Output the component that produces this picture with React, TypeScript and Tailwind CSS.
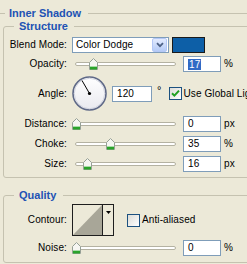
import type { ReactNode } from "react";

const sliders = [
  { label: "Distance:", pos: 0, value: "0", unit: "px", gap: "mt-[5px]" },
  { label: "Choke:", pos: 34, value: "35", unit: "%", gap: "mt-[4px]" },
  { label: "Size:", pos: 11, value: "16", unit: "px", gap: "mt-[4px]" },
];

function Thumb() {
  return (
    <svg width="9" height="12" viewBox="0 0 9 12">
      <path d="M0.5 11.5V4.5L4.5 0.5L8.5 4.5V11.5Z" fill="#f6f6f2" stroke="#96a096" />
      <rect x="1" y="9" width="7" height="2.5" fill="#2aa32a" />
      <rect x="1" y="8" width="7" height="1" fill="#a8dca8" />
    </svg>
  );
}

function Slider({ pos }: { pos: number }) {
  return (
    <div className="relative w-[111px] h-[16px] shrink-0 flex items-center pl-[3px]">
      <div className="w-[101px] h-[4px] rounded-full border border-[#b4b2a2] bg-white" />
      <div className="absolute top-[2px] flex" style={{ left: pos }}>
        <Thumb />
      </div>
    </div>
  );
}

function Field({ value, selected, wide }: { value: string; selected?: boolean; wide?: boolean }) {
  return (
    <div
      className={`${wide ? "w-[40px]" : "w-[38px]"} h-[16px] shrink-0 border border-[#7f9db9] bg-white flex items-center pl-[4px]`}
    >
      {selected ? <span className="bg-[#316ac5] text-white px-px leading-[11px]">{value}</span> : value}
    </div>
  );
}

function Check({ on }: { on?: boolean }) {
  return (
    <span className="w-[13px] h-[13px] shrink-0 border border-[#1c5180] bg-linear-to-br from-[#dcdcd7] to-white flex items-center justify-center">
      {on && (
        <svg width="9" height="9" viewBox="0 0 9 9">
          <path d="M1 4.2L3.4 6.6L8 1.6" stroke="#21a121" strokeWidth="2" fill="none" />
        </svg>
      )}
    </span>
  );
}

function Row({ label, className, children }: { label: string; className?: string; children: ReactNode }) {
  return (
    <div className={`flex items-center ${className ?? ""}`}>
      <span className="w-[63px] mr-[5px] shrink-0 text-right">{label}</span>
      {children}
    </div>
  );
}

function Dial() {
  return (
    <svg width="35" height="35" viewBox="0 0 35 35" className="shrink-0">
      <defs>
        <linearGradient id="dial" x1="0" y1="0" x2="0" y2="1">
          <stop offset="0" stopColor="#ffffff" />
          <stop offset="1" stopColor="#e9e9ef" />
        </linearGradient>
      </defs>
      <circle cx="17.5" cy="17.5" r="16.5" fill="url(#dial)" stroke="#5f6987" strokeWidth="1.6" />
      <circle cx="17.5" cy="17.5" r="15.2" fill="none" stroke="#c9cdd9" strokeWidth="0.8" />
      <line x1="17.5" y1="17.5" x2="10" y2="4.5" stroke="#000" strokeWidth="1" />
      <circle cx="17.5" cy="17.5" r="1.6" fill="#000" />
    </svg>
  );
}

export default function App() {
  return (
    <div className="w-[247px] h-[264px] overflow-hidden bg-[#ece9d8] pt-[6px] text-[10px] tracking-[0.1px] leading-none text-black font-['Liberation_Sans',Arial,sans-serif]">
      <div className="flex items-center h-[14px]">
        <div className="w-[5px] h-px bg-[#c5c2b0]" />
        <span className="ml-[4px] mr-[7px] font-bold text-[11px] tracking-normal text-[#2152b4]">Inner Shadow</span>
        <div className="flex-1 h-px bg-[#c5c2b0]" />
      </div>

      <fieldset className="ml-[3px] w-[270px] rounded-[3px] border border-[#c5c2b0] pb-[5px]">
        <legend className="ml-[10px] pl-[5px] pr-[6px] leading-[12px] font-bold text-[11px] tracking-normal text-[#2152b4]">
          Structure
        </legend>

        <Row label="Blend Mode:" className="mt-[5px] h-[16px]">
          <div className="w-[97px] h-[16px] border border-[#7f9db9] bg-white flex items-center pl-[3px] pr-px">
            <span className="flex-1">Color Dodge</span>
            <span className="w-[15px] h-[14px] rounded-[2px] border border-[#b4c8f6] bg-linear-to-b from-[#e3ebfe] to-[#b5cbf7] flex items-center justify-center">
              <svg width="8" height="6" viewBox="0 0 8 6">
                <path d="M1 1.2L4 4.2L7 1.2" stroke="#4d6185" strokeWidth="1.8" fill="none" />
              </svg>
            </span>
          </div>
          <div className="ml-[3px] w-[33px] h-[16px] border border-[#1a1a1a] bg-[#0d5fa7]" />
        </Row>

        <Row label="Opacity:" className="mt-[3px] h-[16px]">
          <Slider pos={17} />
          <Field value="17" selected />
          <span className="ml-[3px]">%</span>
        </Row>

        <Row label="Angle:" className="mt-[4px] h-[35px]">
          <Dial />
          <div className="ml-[5px]">
            <Field value="120" wide />
          </div>
          <span className="ml-[5px] self-start mt-[9px] text-[11px]">°</span>
          <div className="ml-[7px] flex items-center gap-[2px] whitespace-nowrap">
            <Check on />
            <span>Use Global Light</span>
          </div>
        </Row>

        {sliders.map((s) => (
          <Row key={s.label} label={s.label} className={`${s.gap} h-[16px]`}>
            <Slider pos={s.pos} />
            <Field value={s.value} />
            <span className="ml-[3px]">{s.unit}</span>
          </Row>
        ))}
      </fieldset>

      <fieldset className="ml-[3px] mt-[11px] w-[270px] rounded-[3px] border border-[#c5c2b0] pb-[6px]">
        <legend className="ml-[10px] pl-[5px] pr-[7px] leading-[12px] font-bold text-[11px] tracking-normal text-[#2152b4]">
          Quality
        </legend>

        <Row label="Contour:" className="mt-[3px] h-[32px]">
          <div className="flex w-[42px] h-[32px] border border-[#1e1e1e]">
            <svg width="29" height="30" viewBox="0 0 29 30">
              <rect width="29" height="30" fill="#ece9d8" />
              <path d="M0 30L29 0V30Z" fill="#a8a698" />
            </svg>
            <div className="w-px bg-[#1e1e1e]" />
            <div className="flex-1 flex justify-center pt-[6px]">
              <svg width="5" height="3" viewBox="0 0 5 3">
                <path d="M0 0H5L2.5 3Z" fill="#000" />
              </svg>
            </div>
          </div>
          <div className="ml-[13px] flex items-center gap-[2px]">
            <Check />
            <span>Anti-aliased</span>
          </div>
        </Row>

        <Row label="Noise:" className="mt-[4px] h-[16px]">
          <Slider pos={0} />
          <Field value="0" />
          <span className="ml-[3px]">%</span>
        </Row>
      </fieldset>
    </div>
  );
}
